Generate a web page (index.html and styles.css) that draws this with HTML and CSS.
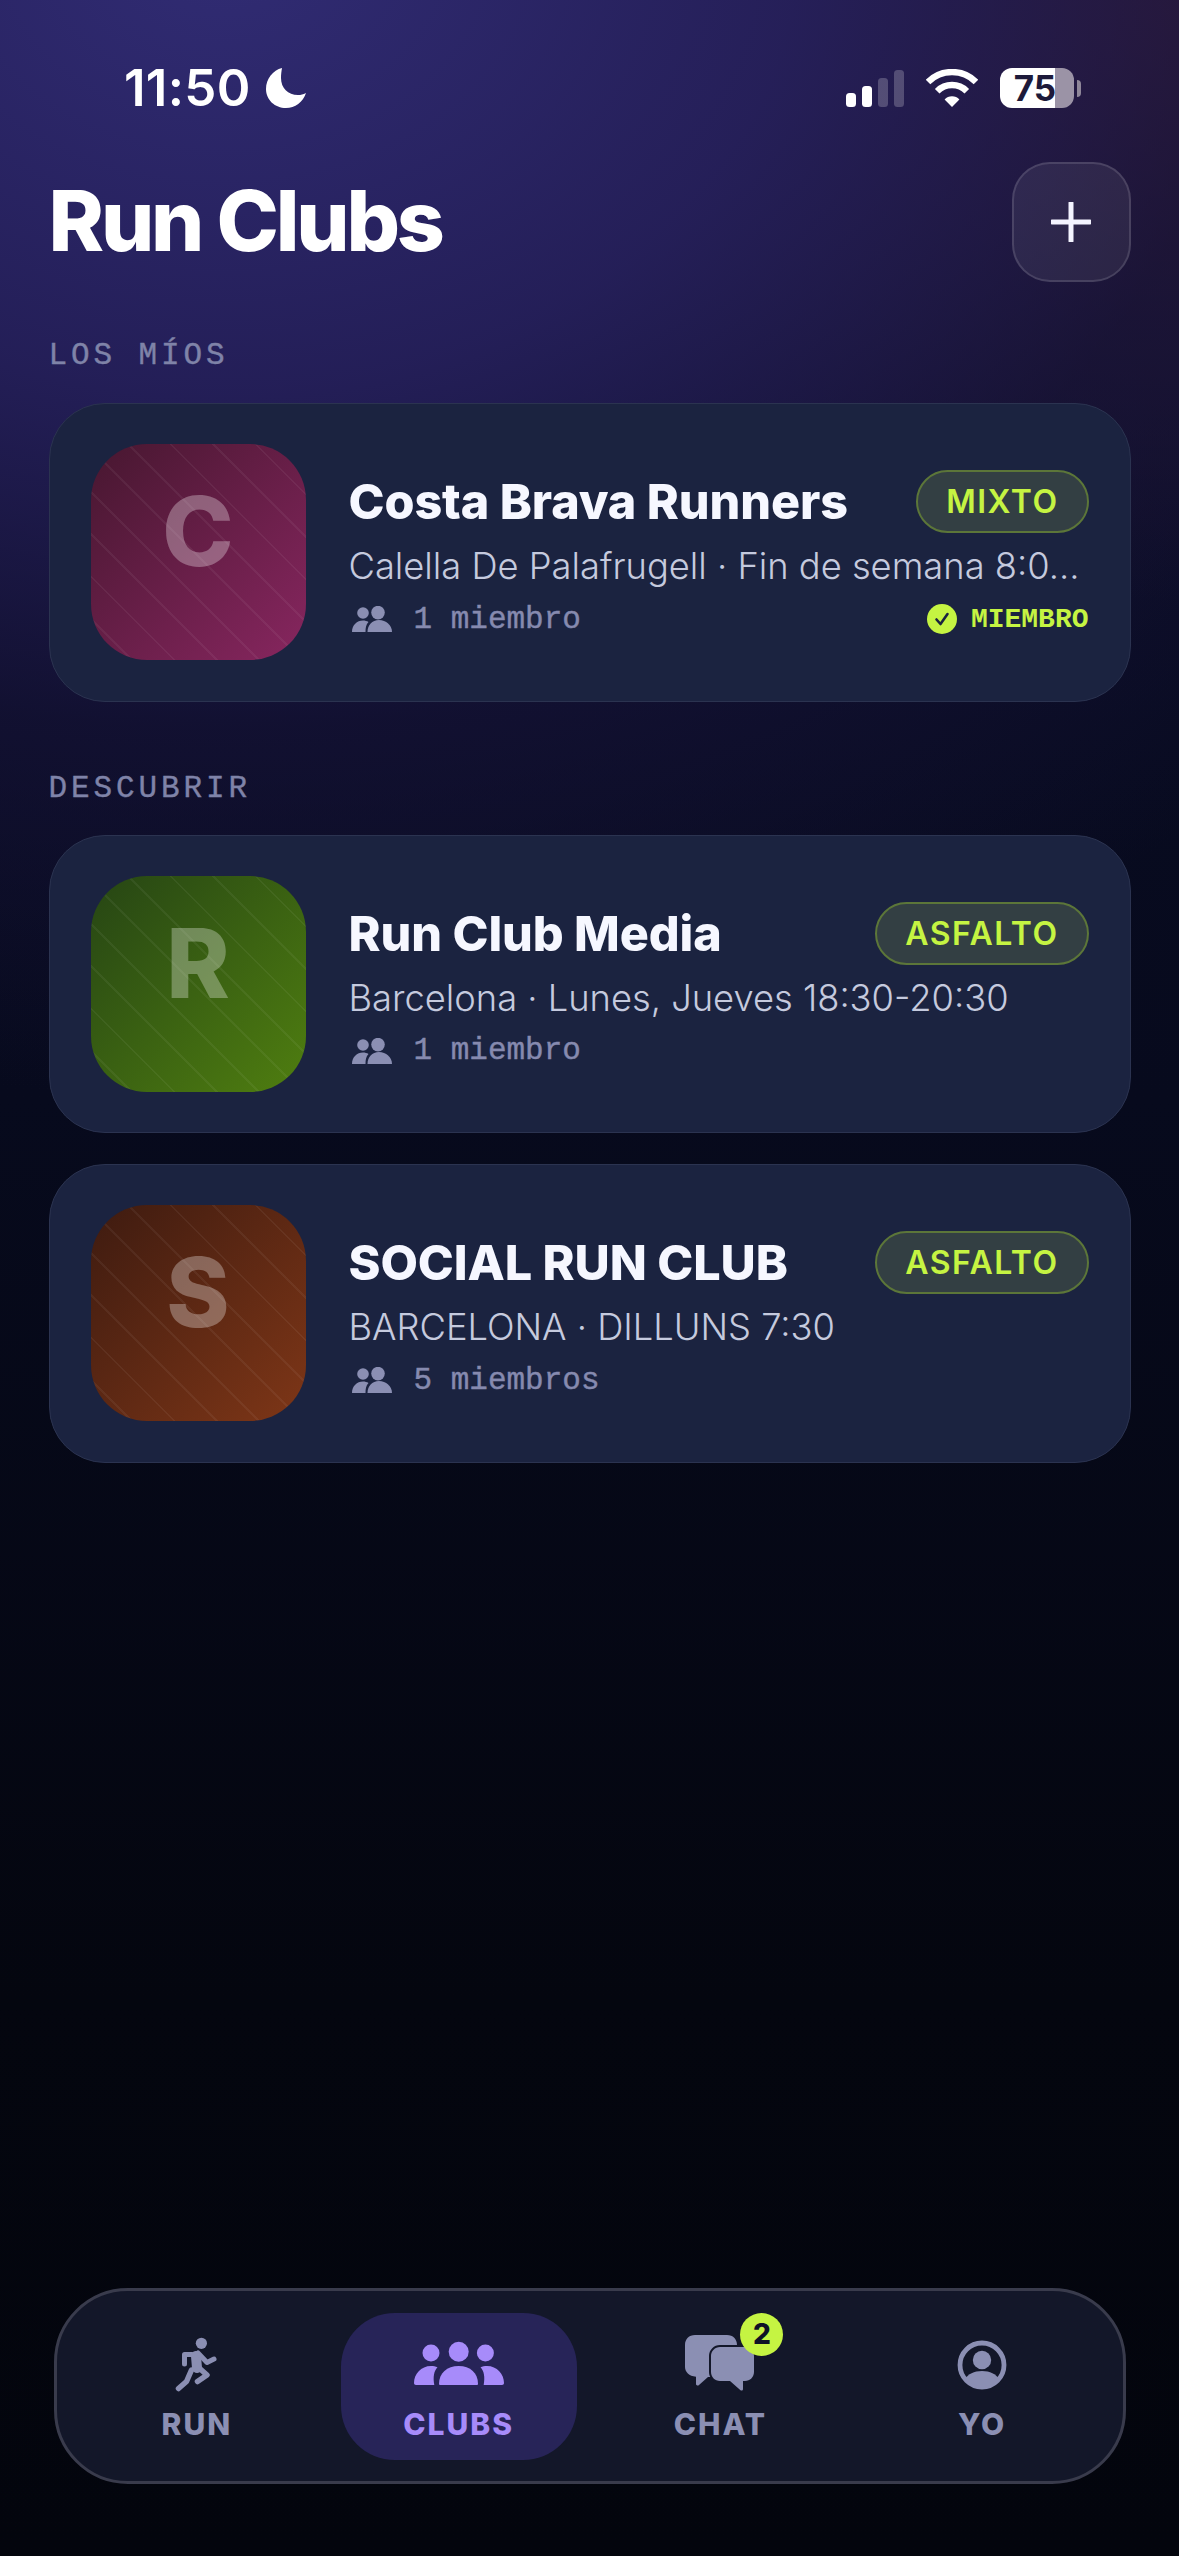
FILE: index.html
```html
<!DOCTYPE html>
<html lang="es">
<head>
<meta charset="utf-8">
<title>Run Clubs</title>
<link rel="stylesheet" href="styles.css">
</head>
<body>
<div class="screen">
  <div class="status">
    <div class="status-left">
      <span class="time">11:50</span>
      <svg class="moon" viewBox="0 0 40 40"><path d="M16 0C7 2 0 11 0 21c0 11 9 19 20 19 9 0 17-6 20-15-3 1.500-5 2-8 2-10 0-17-7-17-17 0-4 .5-7 1-10z"/></svg>
    </div>
    <div class="status-right">
      <div class="signal">
        <i class="bar b1"></i><i class="bar b2"></i><i class="bar b3 dim"></i><i class="bar b4 dim"></i>
      </div>
      <svg class="wifi" viewBox="0 0 52 38"><g fill="none" stroke="#fff" stroke-width="6.5"><path d="M2 13A34 34 0 0 1 50 13"/><path d="M11.2 22.2A21 21 0 0 1 40.8 22.2"/></g><path fill="#fff" d="M26 38 18.6 30.6A10 10 0 0 1 33.4 30.6z"/></svg>
      <div class="battery"><span>75</span></div>
      <i class="battery-tip"></i>
    </div>
  </div>

  <main class="content">
    <header class="head">
      <h1>Run Clubs</h1>
      <button class="add" aria-label="Nuevo">
        <svg viewBox="0 0 40 40" width="40" height="40"><path d="M20 1v38M1 20h38" stroke="#f4f4ff" stroke-width="5" stroke-linecap="round"/></svg>
      </button>
    </header>

    <h2 class="section first">LOS MÍOS</h2>
    <article class="card">
      <div class="avatar rose"><span>C</span></div>
      <div class="body">
        <div class="row">
          <h3>Costa Brava Runners</h3>
          <span class="pill">MIXTO</span>
        </div>
        <p class="sub">Calella De Palafrugell · Fin de semana 8:0…</p>
        <div class="meta">
          <svg class="people" viewBox="0 0 40 26"><circle cx="11" cy="7" r="5.8"/><circle cx="26" cy="6.6" r="6.8"/><path d="M0 26C0 19 5 14.500 11 14.500c2 0 4 .5 5.500 1.500-2.500 2.500-3 6-3 10z"/><path d="M15.500 26C15.500 19 20 14 27 14s13 5 13 12z"/></svg>
          <span class="count">1 miembro</span>
          <span class="member">
            <svg viewBox="0 0 30 30" width="30" height="30"><circle cx="15" cy="15" r="15" fill="#c5f442"/><path d="M9.500 15.500l4 4.500 7-10" fill="none" stroke="#1b2340" stroke-width="2.600" stroke-linecap="round" stroke-linejoin="round"/></svg>
            MIEMBRO
          </span>
        </div>
      </div>
    </article>

    <h2 class="section">DESCUBRIR</h2>
    <article class="card">
      <div class="avatar green"><span>R</span></div>
      <div class="body">
        <div class="row">
          <h3>Run Club Media</h3>
          <span class="pill">ASFALTO</span>
        </div>
        <p class="sub">Barcelona · Lunes, Jueves 18:30-20:30</p>
        <div class="meta">
          <svg class="people" viewBox="0 0 40 26"><circle cx="11" cy="7" r="5.8"/><circle cx="26" cy="6.6" r="6.8"/><path d="M0 26C0 19 5 14.500 11 14.500c2 0 4 .5 5.500 1.500-2.500 2.500-3 6-3 10z"/><path d="M15.500 26C15.500 19 20 14 27 14s13 5 13 12z"/></svg>
          <span class="count">1 miembro</span>
        </div>
      </div>
    </article>
    <article class="card next">
      <div class="avatar orange"><span>S</span></div>
      <div class="body">
        <div class="row">
          <h3>SOCIAL RUN CLUB</h3>
          <span class="pill">ASFALTO</span>
        </div>
        <p class="sub">BARCELONA · DILLUNS 7:30</p>
        <div class="meta">
          <svg class="people" viewBox="0 0 40 26"><circle cx="11" cy="7" r="5.8"/><circle cx="26" cy="6.6" r="6.8"/><path d="M0 26C0 19 5 14.500 11 14.500c2 0 4 .5 5.500 1.500-2.500 2.500-3 6-3 10z"/><path d="M15.500 26C15.500 19 20 14 27 14s13 5 13 12z"/></svg>
          <span class="count">5 miembros</span>
        </div>
      </div>
    </article>
  </main>

  <nav class="tabs">
    <a class="tab">
      <span class="icon">
        <svg viewBox="0 0 44 56" width="44" height="56"><circle cx="26.400" cy="7.300" r="5.600" fill="#8b8fb3"/><g fill="none" stroke="#8b8fb3" stroke-linecap="round" stroke-linejoin="round"><path d="M21 20l1 12" stroke-width="10"/><path d="M17 18.500H9.500v9.500" stroke-width="5"/><path d="M23 17l9 9.500 7-3.500" stroke-width="5"/><path d="M23 31l9 8-9.500 6.500" stroke-width="5.500"/><path d="M16.500 34l-5 11.500-8 7" stroke-width="5.500"/></g></svg>
      </span>
      <span class="label">RUN</span>
    </a>
    <a class="tab active">
      <span class="icon">
        <svg viewBox="0 0 92 56" width="92" height="56"><g fill="#a78bfa"><circle cx="45.700" cy="15.700" r="10"/><circle cx="18" cy="17" r="8.500"/><circle cx="72.400" cy="17" r="8.500"/><path d="M26 48c0-11 8-18 19.700-18S65 37 65 48c0 .6-.6 1-1.400 1H27.500c-.9 0-1.500-.4-1.500-1z"/><path d="M1 47c0-9 7-17 17-17 2.500 0 4.500.5 6.500 1.300C21 35 19.800 41 21.300 49H3c-1.200 0-2-.8-2-2z"/><path d="M91 47c0-9-7-17-17-17-2.500 0-4.500.5-6.500 1.300C71 35 72.200 41 70.700 49H89c1.200 0 2-.8 2-2z"/></g></svg>
      </span>
      <span class="label">CLUBS</span>
    </a>
    <a class="tab">
      <span class="icon">
        <svg class="chat" viewBox="0 0 72 56" width="72" height="56"><path fill="#8b8fb3" d="M11-1h32c6 0 10 4 10 10v22c0 6-4 10-10 10H24l-9 8c-1 1-3 .5-3-1v-7.200C5 40 1 36 1 31V9C1 3 5-1 11-1z"/><path fill="#8b8fb3" stroke="#131729" stroke-width="4" paint-order="stroke" d="M36 11h25c5 0 9 4 9 9v16c0 5-4 9-9 9h-2v8c0 1.500-1.500 2-2.500 1.200L46 45H36c-5 0-9-4-9-9V20c0-5 4-9 9-9z"/></svg>
        <b class="badge">2</b>
      </span>
      <span class="label">CHAT</span>
    </a>
    <a class="tab">
      <span class="icon">
        <svg viewBox="0 0 56 56" width="56" height="56"><circle cx="28" cy="29" r="22" fill="none" stroke="#8b8fb3" stroke-width="4.800"/><circle cx="28" cy="24" r="9.200" fill="#8b8fb3"/><path fill="#8b8fb3" d="M11 43c3-5 9-8 17-8s14 3 17 8c-4 4.500-10 7-17 7s-13-2.500-17-7z"/></svg>
      </span>
      <span class="label">YO</span>
    </a>
  </nav>
</div>
</body>
</html>
```

FILE: styles.css
```css
* { box-sizing: border-box; }

html, body {
  margin: 0;
  padding: 0;
  background: #04060f;
}

.screen {
  width: 1179px;
  height: 2556px;
  overflow: hidden;
  display: flex;
  flex-direction: column;
  font-family: Inter, "Liberation Sans", sans-serif;
  color: #f6f7ff;
  background:
    radial-gradient(ellipse 1500px 1150px at 19% -2%, rgba(49, 44, 116, 1) 0%, rgba(38, 32, 92, .92) 38%, rgba(24, 20, 60, .6) 68%, rgba(8, 10, 30, 0) 100%),
    radial-gradient(ellipse 800px 600px at 100% 0%, rgba(58, 28, 52, 1) 0%, rgba(40, 24, 50, .6) 55%, rgba(8, 10, 30, 0) 100%),
    linear-gradient(180deg, #0a0d26 0, #070a1d 1100px, #04060f 2000px, #03050d 100%);
}

/* status bar */
.status {
  margin-top: 66px;
  height: 44px;
  padding: 0 98px 0 124px;
  display: flex;
  justify-content: space-between;
  align-items: center;
}
.status-left { display: flex; align-items: center; gap: 15px; }
.time { font-size: 51px; font-weight: 600; letter-spacing: .3px; line-height: 44px; color: #fff; }
.moon { width: 40px; height: 40px; fill: #fff; }
.status-right { display: flex; align-items: center; }
.signal { display: flex; align-items: flex-end; gap: 6px; height: 37px; margin-right: 22px; margin-top: 1px; }
.bar { display: block; width: 10px; background: #fff; border-radius: 3.500px; }
.bar.dim { background: rgba(255, 255, 255, .22); }
.b1 { height: 14px; }
.b2 { height: 21px; }
.b3 { height: 29px; }
.b4 { height: 37px; }
.wifi { width: 52px; height: 38px; margin-right: 22px; }
.battery {
  width: 74px;
  height: 40px;
  border-radius: 12px;
  background: linear-gradient(90deg, #fff 75%, #9b93a6 75%);
  display: flex;
  align-items: center;
  justify-content: center;
  padding-right: 4px;
  font-size: 35px;
  font-weight: 700;
  color: #1d1a3a;
}
.battery-tip {
  display: block;
  width: 4px;
  height: 17px;
  margin-left: 3px;
  border-radius: 0 8px 8px 0;
  background: #8f8799;
}

/* content */
.content { flex: 1; padding: 0 48.500px; }
.head {
  margin-top: 52px;
  height: 120px;
  display: flex;
  justify-content: space-between;
  align-items: center;
}
h1 {
  margin: 0 0 2px;
  font-size: 84px;
  font-weight: 800;
  letter-spacing: -3.200px;
  line-height: 100px;
  color: #fff;
}
.add {
  width: 119px;
  height: 120px;
  padding: 0;
  display: flex;
  align-items: center;
  justify-content: center;
  border-radius: 38px;
  background: rgba(255, 255, 255, .07);
  border: 2px solid rgba(255, 255, 255, .13);
}
.section {
  margin: 69px 0 28px;
  height: 36px;
  line-height: 36px;
  font-family: "Liberation Mono", monospace;
  font-size: 31px;
  font-weight: 400;
  letter-spacing: 3.900px;
  -webkit-text-stroke: .4px #7f83a8;
  color: #7f83a8;
}
.section.first { margin-top: 56px; margin-bottom: 29px; }

.card {
  display: flex;
  align-items: center;
  gap: 43px;
  height: 298.500px;
  padding: 0 41px;
  background: #1b2340;
  border: 1.500px solid #2b3350;
  border-radius: 56px;
}
.card.next { margin-top: 31px; }

.avatar {
  flex: none;
  width: 215px;
  height: 216px;
  border-radius: 56px;
  padding-bottom: 42px;
  display: flex;
  align-items: center;
  justify-content: center;
  font-size: 96px;
  font-weight: 800;
  color: rgba(255, 255, 255, .3);
}
.rose {
  background:
    repeating-linear-gradient(45deg, transparent 0 28px, rgba(255, 255, 255, .05) 28px 30px),
    linear-gradient(135deg, #471730, #87265f);
}
.green {
  background:
    repeating-linear-gradient(45deg, transparent 0 28px, rgba(255, 255, 255, .05) 28px 30px),
    linear-gradient(135deg, #264514, #4f7e10);
}
.orange {
  background:
    repeating-linear-gradient(45deg, transparent 0 28px, rgba(255, 255, 255, .05) 28px 30px),
    linear-gradient(135deg, #3e1b10, #7e3617);
}

.body { flex: 1; min-width: 0; padding-top: 3px; }
.row {
  display: flex;
  align-items: center;
  justify-content: space-between;
  height: 63px;
}
h3 {
  margin: 0;
  font-size: 48.500px;
  font-weight: 800;
  letter-spacing: -.1px;
  color: #f6f7ff;
  white-space: nowrap;
}
.pill {
  height: 63px;
  padding: 0 28px;
  display: flex;
  align-items: center;
  border-radius: 32px;
  background: #333f43;
  border: 2px solid #5c7639;
  font-size: 32px;
  font-weight: 600;
  letter-spacing: 1.500px;
  color: #c5f442;
}
.sub {
  margin: 10px 0 0;
  height: 47px;
  line-height: 47px;
  font-size: 36.300px;
  font-weight: 300;
  color: #c5cade;
  white-space: nowrap;
}
.meta {
  margin-top: 11px;
  height: 36px;
  padding-left: 3px;
  display: flex;
  align-items: center;
  gap: 22px;
}
.people { width: 40px; height: 26px; fill: #8b8fb3; flex: none; }
.count {
  font-family: "Liberation Mono", monospace;
  font-size: 31px;
  -webkit-text-stroke: .4px #868aaf;
  color: #868aaf;
}
.member {
  margin-left: auto;
  display: flex;
  align-items: center;
  gap: 14px;
  font-family: "Liberation Mono", monospace;
  font-size: 28px;
  font-weight: 700;
  color: #c5f442;
}

/* tab bar */
.tabs {
  flex: none;
  align-self: center;
  width: 1072px;
  height: 196px;
  margin-bottom: 72px;
  padding: 22px 22.500px;
  display: flex;
  gap: 26px;
  background: #131729;
  border: 3px solid #393b4c;
  border-radius: 74px;
}
.tab {
  width: 236px;
  height: 147px;
  padding-top: 23px;
  display: flex;
  flex-direction: column;
  align-items: center;
  border-radius: 54px;
  color: #8b8fb3;
}
.tab.active { background: #272458; color: #a78bfa; }
.icon { position: relative; display: block; height: 56px; }
.icon svg { display: block; overflow: visible; }
.badge {
  position: absolute;
  left: 56px;
  top: -23px;
  width: 43px;
  height: 43px;
  border-radius: 50%;
  background: #c5f442;
  color: #0f1226;
  font-size: 28px;
  font-weight: 800;
  line-height: 43px;
  text-align: center;
}
.label {
  margin-top: 14px;
  height: 36px;
  line-height: 36px;
  font-size: 30px;
  font-weight: 800;
  letter-spacing: 2px;
}
```
